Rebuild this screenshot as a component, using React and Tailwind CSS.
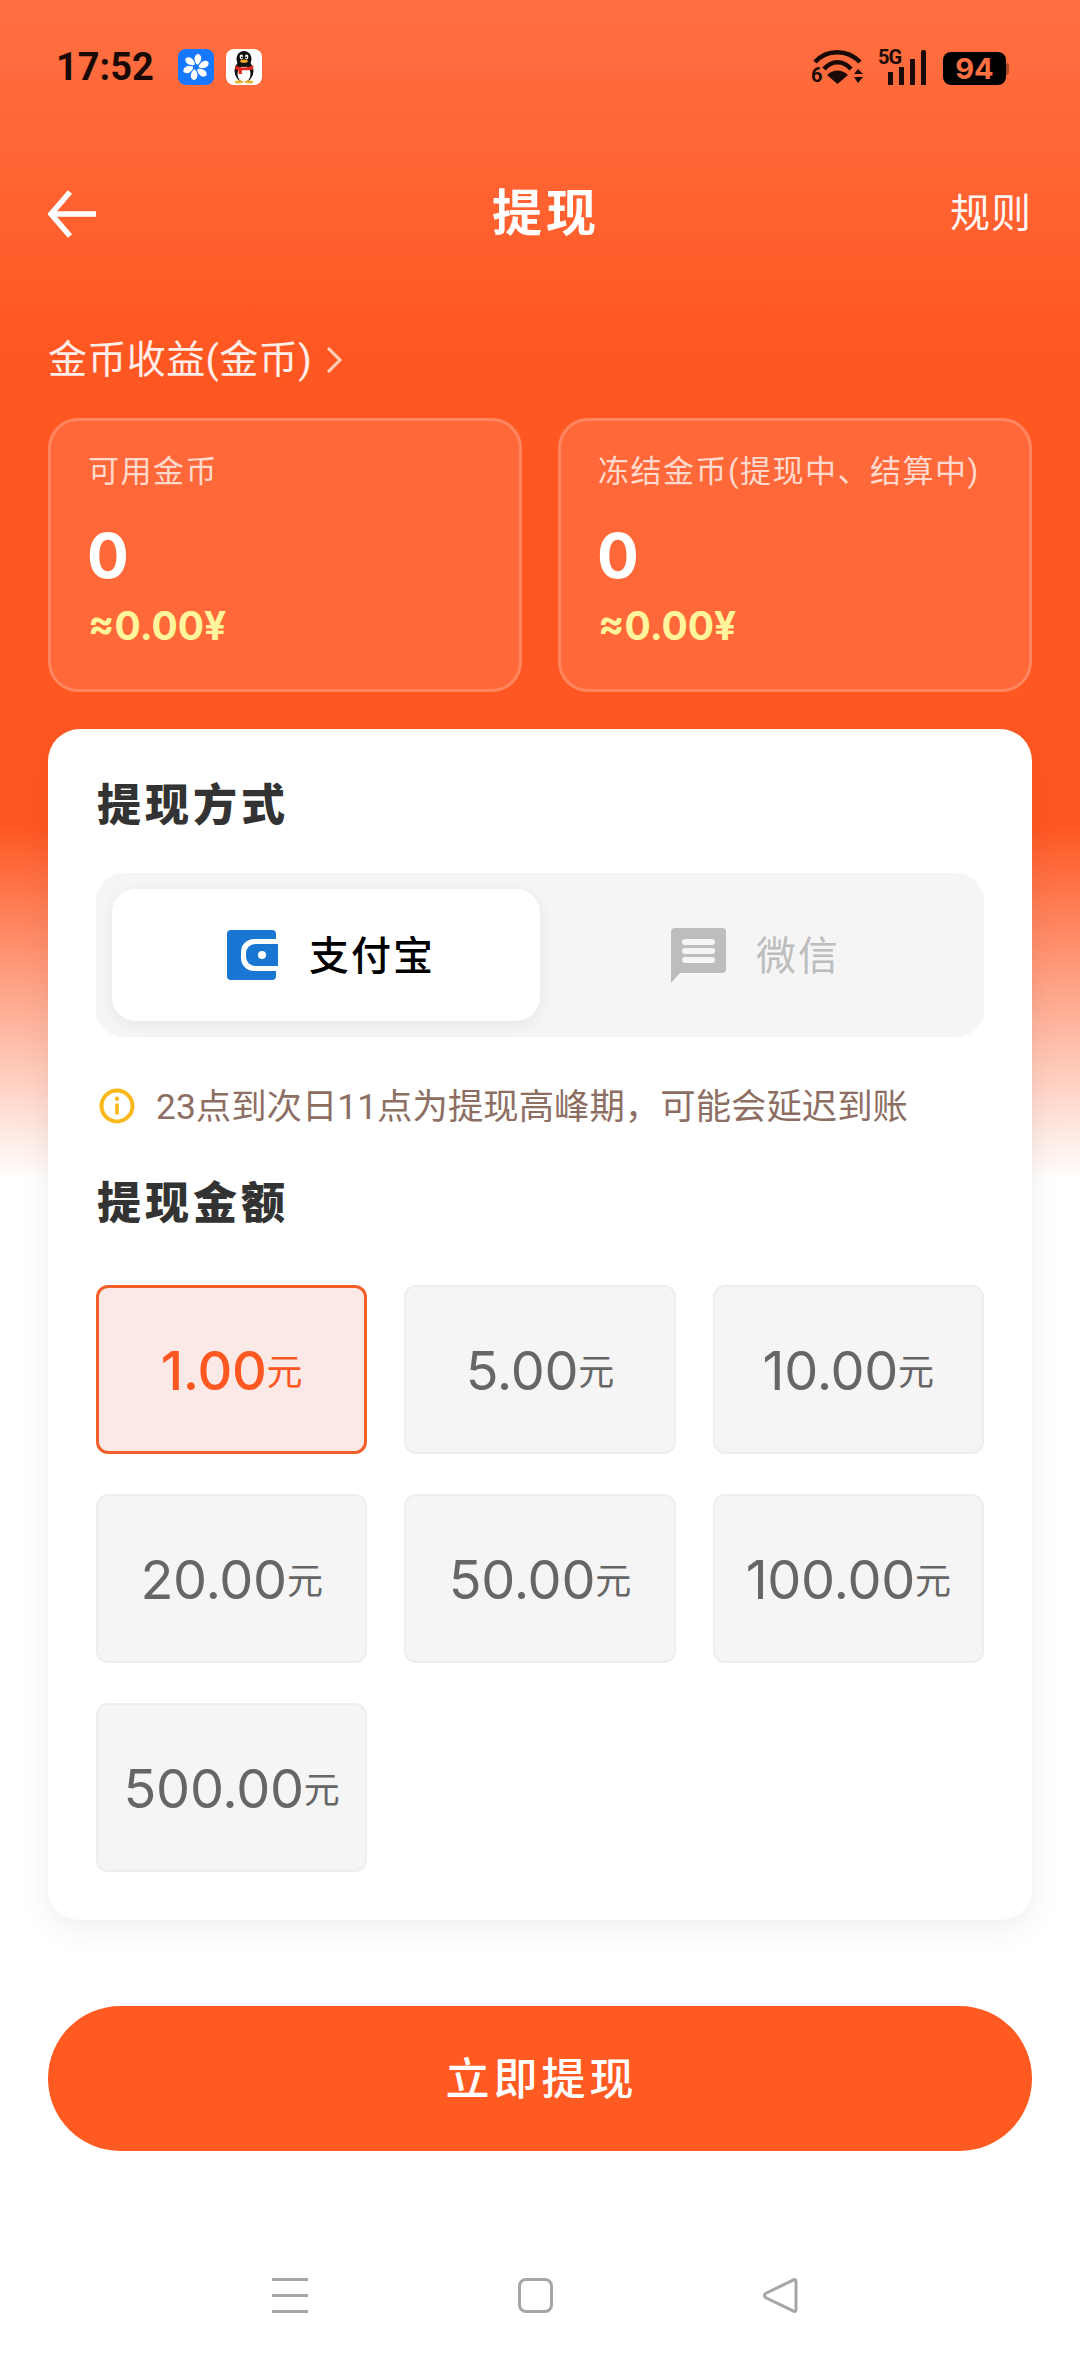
import React from "react";

const amounts = ["1.00", "5.00", "10.00", "20.00", "50.00", "100.00", "500.00"];
const inter = "font-[family-name:Inter,'Noto_Sans_CJK_SC',sans-serif]";

function Pinwheel() {
  const blades = [0, 60, 120, 180, 240, 300];
  return (
    <div className="w-[36px] h-[36px] rounded-[8px] bg-[#1677ff] flex items-center justify-center">
      <svg width="30" height="30" viewBox="0 0 28 28">
        {blades.map((a) => (
          <path key={a} transform={`rotate(${a} 14 14)`} d="M14.4 11.2C12 8 11.6 3 16 1.6C20.4 3.4 19.4 8.6 15.8 11.8Z" fill="#fff" />
        ))}
      </svg>
    </div>
  );
}

function Penguin() {
  return (
    <div className="w-[36px] h-[36px] rounded-[8px] bg-white flex items-center justify-center">
      <svg width="32" height="34" viewBox="0 0 32 34">
        <ellipse cx="16" cy="21" rx="9.5" ry="11" fill="#111" />
        <ellipse cx="16" cy="24" rx="6.5" ry="8" fill="#fff" />
        <ellipse cx="16" cy="9" rx="7.5" ry="8" fill="#111" />
        <ellipse cx="13.4" cy="7" rx="1.7" ry="2.4" fill="#fff" />
        <ellipse cx="18.6" cy="7" rx="1.7" ry="2.4" fill="#fff" />
        <circle cx="13.8" cy="7.4" r="0.9" fill="#111" />
        <circle cx="18.2" cy="7.4" r="0.9" fill="#111" />
        <ellipse cx="16" cy="11.2" rx="3.8" ry="1.6" fill="#f5a623" />
        <path d="M7 15.5C12 18 20 18 25.5 15.5L25 19.5C21 20.5 12 20.5 7.5 19.5Z" fill="#e8291c" />
        <rect x="10.5" y="19" width="3.4" height="5" fill="#e8291c" />
        <ellipse cx="11" cy="32" rx="4.4" ry="1.4" fill="#e8b12c" />
        <ellipse cx="21" cy="32" rx="4.4" ry="1.4" fill="#e8b12c" />
      </svg>
    </div>
  );
}

function Wifi() {
  return (
    <div className="relative w-[54px] h-[37px]">
      <svg width="54" height="37" viewBox="0 0 54 37" fill="none">
        <path d="M4 14C16 1 36 1 49 14" stroke="#1a0a05" strokeWidth="4.5" />
        <path d="M13 21C21 12 32 12 40 21" stroke="#1a0a05" strokeWidth="4.5" />
        <path d="M16 27C22 21 31 21 37 27L26.5 36Z" fill="#1a0a05" />
        <path d="M43 26L47 21L52 26ZM43 29H52L47 35Z" fill="#1a0a05" />
      </svg>
      <span className="absolute left-0 bottom-0 text-[20px] leading-[20px] font-bold text-[#1a0a05]">6</span>
    </div>
  );
}

function Signal() {
  return (
    <div className="relative w-[48px] h-[37px] flex items-end justify-end gap-[6px]">
      <span className="absolute left-0 -top-[1px] text-[20px] leading-[20px] tracking-[-1px] font-bold text-[#1a0a05]">5G</span>
      <div className="w-[5px] h-[13px] bg-[#1a0a05]" />
      <div className="w-[5px] h-[18px] bg-[#1a0a05]" />
      <div className="w-[5px] h-[26px] bg-[#1a0a05]" />
      <div className="w-[5px] h-[35px] bg-[#1a0a05] rounded-t-[2px]" />
    </div>
  );
}

function Battery() {
  return (
    <div className="flex items-center">
      <div className={`w-[63px] h-[33px] rounded-[8px] bg-black flex items-center justify-center text-[#ff7043] text-[29px] leading-[33px] font-bold ${inter}`}>94</div>
      <div className="w-[3px] h-[12px] rounded-r-[3px] bg-[#a8492a]" />
    </div>
  );
}

function AlipayIcon() {
  return (
    <svg className="ml-[10px]" width="51" height="50" viewBox="0 0 51 50">
      <path d="M4 0H45A4 4 0 0 1 49 4V9H27A13 13 0 0 0 14 22V28A13 13 0 0 0 27 41H49V46A4 4 0 0 1 45 50H4A4 4 0 0 1 0 46V4A4 4 0 0 1 4 0Z" fill="#1976d2" />
      <path d="M28 14H51V36H28A9 9 0 0 1 19 27V23A9 9 0 0 1 28 14Z" fill="#1976d2" />
      <circle cx="35" cy="25" r="4" fill="#fff" />
    </svg>
  );
}

function WechatIcon() {
  return (
    <svg width="55" height="55" viewBox="0 0 55 55">
      <path d="M4 0H51A4 4 0 0 1 55 4V41A4 4 0 0 1 51 45H9L0 55V4A4 4 0 0 1 4 0Z" fill="#bdbdbd" />
      <rect x="11" y="11" width="33" height="6" rx="3" fill="#f5f5f5" />
      <rect x="11" y="20" width="33" height="6" rx="3" fill="#f5f5f5" />
      <rect x="11" y="29" width="33" height="6" rx="3" fill="#f5f5f5" />
    </svg>
  );
}

function StatCard({ label }) {
  return (
    <div className="h-[274px] rounded-[30px] bg-white/10 border-[3px] border-white/20 pl-[37px] pt-[29px]">
      <div className="text-[31px] leading-[44px] tracking-[1.5px] text-white/75 whitespace-nowrap">{label}</div>
      <div className={`mt-[24px] -ml-[1px] text-[62px] leading-[76px] font-bold text-white ${inter}`}>0</div>
      <div className={`mt-[7px] text-[39px] leading-[50px] font-bold text-[#fff59d] ${inter}`}>≈0.00¥</div>
    </div>
  );
}

function SectionTitle({ children, className }) {
  return <div className={`ml-[1px] text-[44px] leading-[46px] tracking-[4px] font-black text-[#333333] ${className}`}>{children}</div>;
}

export default function App() {
  return (
    <div className="w-[1080px] h-[2362px] overflow-hidden bg-white bg-[linear-gradient(180deg,#ff7043_0%,#ff5722_30%,#ff5722_70%,#ffffff_100%)] bg-no-repeat bg-[length:100%_1180px] font-[family-name:Roboto,'Noto_Sans_CJK_SC',sans-serif]">
      <div className="h-[174px] pt-[48px] flex items-start pl-[56px] pr-[71px]">
        <span className="text-[38px] leading-[38px] font-bold text-[#1a0a05] w-[122px]">17:52</span>
        <div className="mt-[1px] flex gap-[12px]">
          <Pinwheel />
          <Penguin />
        </div>
        <div className="ml-auto flex items-end gap-[13px] h-[37px]">
          <Wifi />
          <Signal />
          <div className="ml-[4px]"><Battery /></div>
        </div>
      </div>

      <div className="h-[80px] px-[48px] grid grid-cols-[1fr_auto_1fr] items-center">
        <svg width="48" height="50" viewBox="0 0 48 50" fill="none">
          <path d="M22 3L3 25L22 47M3 25H48" stroke="#fff" strokeWidth="5.5" />
        </svg>
        <div className="ml-[12px] text-[50px] leading-[56px] tracking-[4px] font-bold text-white">提现</div>
        <div className="justify-self-end text-[40px] leading-[50px] tracking-[1px] text-white/95">规则</div>
      </div>

      <div className="mt-[81px] px-[48px] h-[50px] flex items-center text-[39px] leading-[50px] tracking-[0.4px] text-white/90">
        <span>金币收益(金币)</span>
        <svg className="ml-[14px]" width="17" height="28" viewBox="0 0 17 28" fill="none">
          <path d="M2 2L14 14L2 26" stroke="#ffd0bd" strokeWidth="3" />
        </svg>
      </div>

      <div className="mt-[33px] mx-[48px] grid grid-cols-2 gap-x-[36px]">
        <StatCard label="可用金币" />
        <StatCard label="冻结金币(提现中、结算中)" />
      </div>

      <div className="mt-[37px] mx-[48px] h-[1191px] rounded-[32px] bg-white shadow-[0_8px_32px_rgba(0,0,0,0.07)] px-[48px] pt-[54px]">
        <SectionTitle>提现方式</SectionTitle>
        <div className="mt-[44px] h-[164px] rounded-[28px] bg-[#f5f5f5] p-[16px] flex">
          <div className="w-[428px] h-[132px] rounded-[24px] bg-white shadow-[0_4px_16px_rgba(0,0,0,0.06)] flex items-center justify-center gap-[31px]">
            <AlipayIcon />
            <span className="mt-[3px] text-[40px] leading-[50px] tracking-[2px] font-medium text-black">支付宝</span>
          </div>
          <div className="flex-1 pl-[3px] flex items-center justify-center gap-[30px]">
            <WechatIcon />
            <span className="mt-[3px] text-[40px] leading-[50px] tracking-[2px] text-[#bdbdbd]">微信</span>
          </div>
        </div>

        <div className="mt-[49px] h-[40px] flex items-center gap-[21px]">
          <svg className="ml-[3px]" width="36" height="36" viewBox="0 0 36 36" fill="none">
            <circle cx="18" cy="18" r="15.5" stroke="#fbb81c" strokeWidth="4" />
            <rect x="16.2" y="15.5" width="3.6" height="11" fill="#fbb81c" />
            <circle cx="18" cy="10.8" r="2.2" fill="#fbb81c" />
          </svg>
          <span className="mt-[2px] text-[35.4px] leading-[40px] text-[#8d6e63] whitespace-nowrap">23点到次日11点为提现高峰期，可能会延迟到账</span>
        </div>

        <SectionTitle className="mt-[55px]">提现金额</SectionTitle>

        <div className="mt-[58px] grid grid-cols-3 gap-x-[37px] gap-y-[40px]">
          {amounts.map((a, i) => (
            <div
              key={a}
              className={
                i === 0
                  ? "h-[169px] rounded-[12px] border-[3px] border-[#f4602a] bg-[#fbe9e7] text-[#ff5722] flex items-center justify-center"
                  : "h-[169px] rounded-[12px] border-[2px] border-[#eeeeee] bg-[#f5f5f5] text-[#666666] flex items-center justify-center"
              }
            >
              <span className={`${inter} mt-[2px] text-[54px] leading-[60px] tracking-[-0.3px] ${i === 0 ? "font-medium" : "font-normal"}`}>{a}</span>
              <span className="text-[36px] leading-[60px] mt-[7px]">元</span>
            </div>
          ))}
        </div>
      </div>

      <div className="mt-[86px] mx-[48px] h-[145px] pt-[2px] pl-[3px] rounded-full bg-[#ff5a22] flex items-center justify-center text-[44px] leading-[50px] tracking-[4px] font-medium text-white">
        立即提现
      </div>

      <div className="mt-[127px] pl-[272px] flex items-center gap-[210px] h-[35px]">
        <div className="w-[36px] h-[35px] flex flex-col justify-between">
          <div className="h-[3px] bg-[#a6a6a6]" />
          <div className="h-[3px] bg-[#a6a6a6]" />
          <div className="h-[3px] bg-[#a6a6a6]" />
        </div>
        <div className="w-[35px] h-[35px] rounded-[8px] border-[3px] border-[#a6a6a6]" />
        <svg width="35" height="35" viewBox="0 0 35 35" fill="none">
          <path d="M33 3.5V31.5C33 33.5 31.5 34 30 32.8L2.5 19.5C1.3 18.3 1.3 16.7 2.5 15.5L30 2.2C31.5 1 33 1.5 33 3.5Z" stroke="#a6a6a6" strokeWidth="3" />
        </svg>
      </div>
    </div>
  );
}
